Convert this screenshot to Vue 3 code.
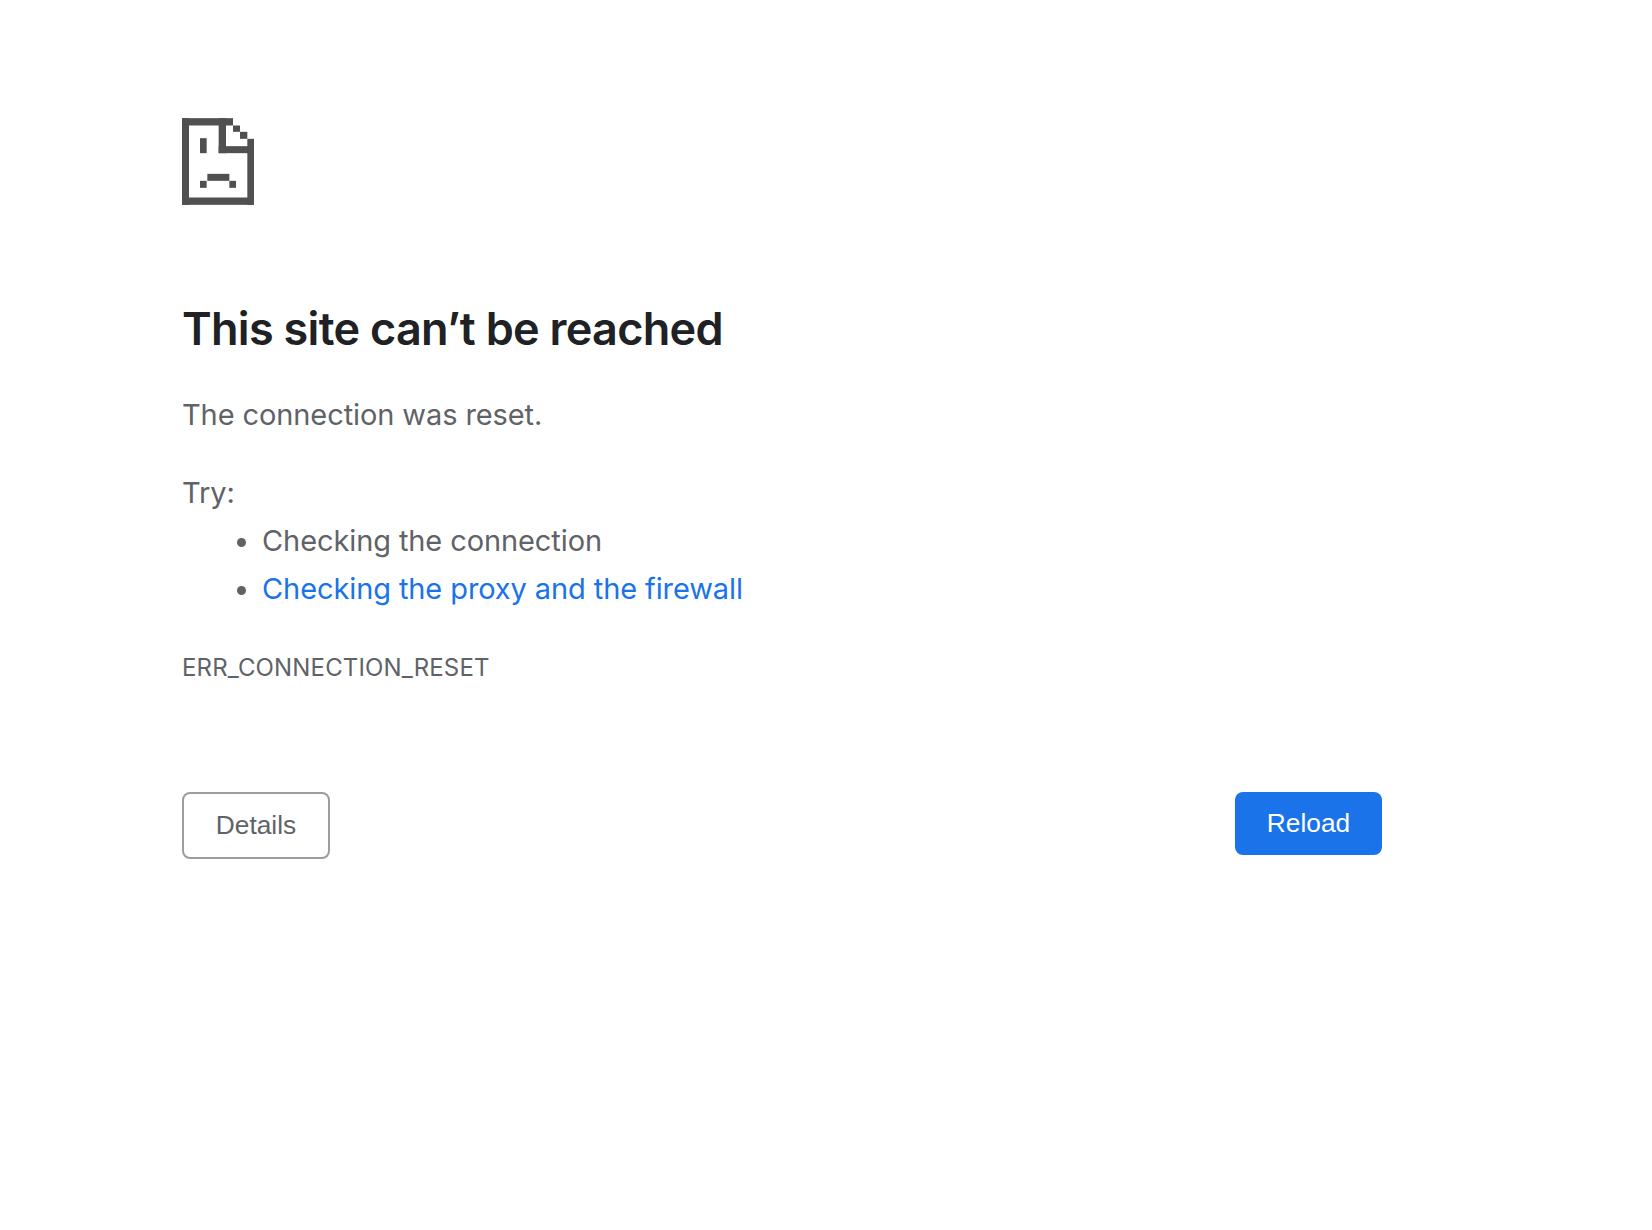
<script setup>
const rects = [
  [0, 0, 153, 22], [0, 0, 21, 260], [0, 238, 216, 22], [196, 62, 20, 198],
  [110, 0, 22, 105], [110, 84, 106, 21], [153, 22, 21, 19], [174, 41, 22, 21],
  [54, 60, 20, 45], [76, 167, 66, 21], [54, 188, 20, 21], [142, 188, 20, 21]
]
</script>

<template>
  <main class="page">
    <svg class="icon" viewBox="0 0 216 260" aria-hidden="true">
      <rect v-for="(r, i) in rects" :key="i" :x="r[0]" :y="r[1]" :width="r[2]" :height="r[3]" />
    </svg>
    <h1 class="title">This site can’t be reached</h1>
    <p class="message">The connection was reset.</p>
    <p class="try">Try:</p>
    <ul class="tips">
      <li>Checking the connection</li>
      <li><a href="#">Checking the proxy and the firewall</a></li>
    </ul>
    <p class="code">ERR_CONNECTION_RESET</p>
    <div class="actions">
      <button class="btn details" type="button">Details</button>
      <button class="btn reload" type="button">Reload</button>
    </div>
  </main>
</template>

<style>
html, body { background: #fff; }
</style>

<style scoped>
.page {
  box-sizing: border-box;
  width: 1200px;
  margin-left: 182px;
  padding-top: 118px;
  font-family: Inter, "Liberation Sans", sans-serif;
  color: #5f6368;
}
.icon { display: block; width: 72px; height: 87px; fill: #505050; }
.title {
  margin: 96px 0 0;
  font-size: 45px;
  line-height: 56px;
  font-weight: 600;
  letter-spacing: -0.7px;
  color: #202124;
}
.message { margin: 38px 0 0; font-size: 29px; letter-spacing: -0.1px; line-height: 40px; }
.try { margin: 38px 0 0; font-size: 29px; letter-spacing: -0.1px; line-height: 40px; }
.tips { margin: 4px 0 0; padding: 0 0 0 80px; font-size: 29px; letter-spacing: -0.1px; line-height: 48px; }
.tips a { color: #1a73e8; text-decoration: none; }
.code { margin: 39px 0 0; font-size: 24px; letter-spacing: 0.15px; line-height: 32px; }
.actions { display: flex; justify-content: space-between; align-items: flex-start; margin-top: 108px; }
.btn {
  box-sizing: border-box;
  border-radius: 8px;
  font-family: "Liberation Sans", Arial, sans-serif;
  font-size: 26.3px;
  padding: 0;
}
.details { width: 148px; height: 67px; background: #fff; border: 2px solid #9a9da2; color: #5f6368; }
.reload { width: 147px; height: 63px; background: #1a73e8; border: none; color: #fff; }
</style>
